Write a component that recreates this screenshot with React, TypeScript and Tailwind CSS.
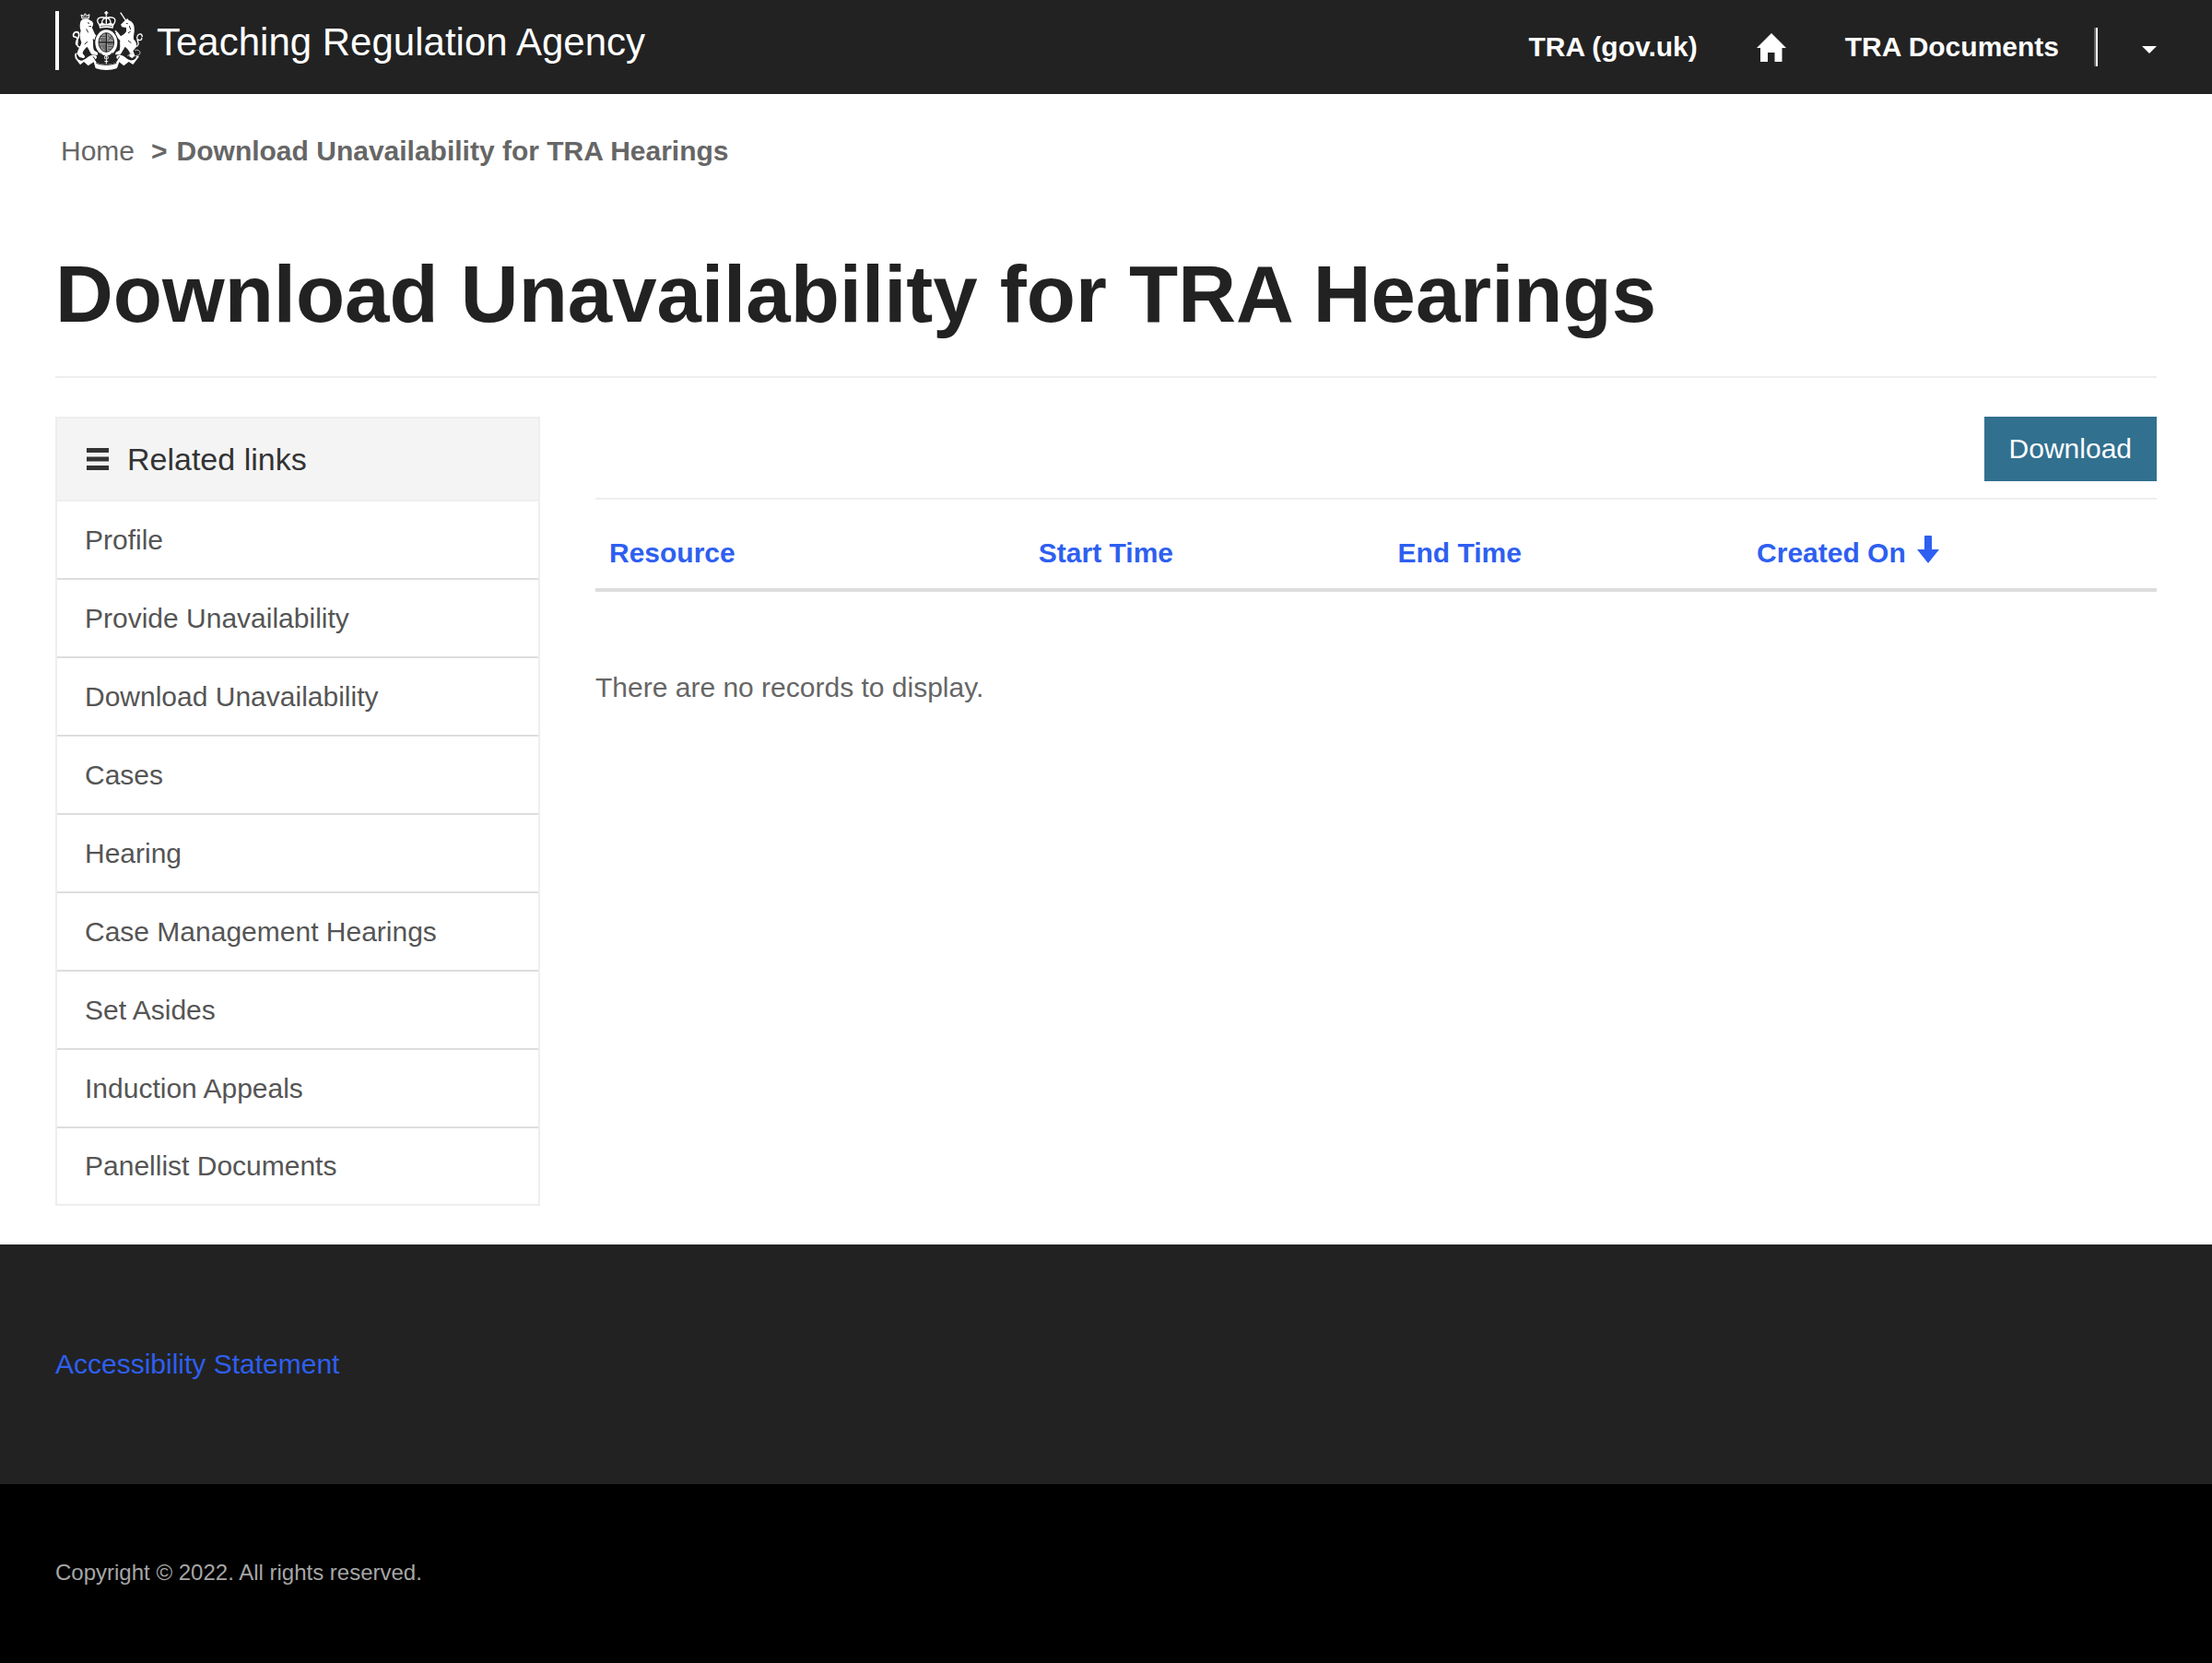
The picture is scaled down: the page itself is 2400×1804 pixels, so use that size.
const relatedLinks = [
  "Profile",
  "Provide Unavailability",
  "Download Unavailability",
  "Cases",
  "Hearing",
  "Case Management Hearings",
  "Set Asides",
  "Induction Appeals",
  "Panellist Documents",
];

function Crest() {
  return (
    <svg viewBox="9 12 234 192" className="h-16 w-[78px] shrink-0" aria-hidden="true" fill="none">
      {/* ribbon */}
      <path
        d="M26 146 C20 160 28 172 38 173 C52 174 60 156 78 155 C92 154 94 164 84 170 L90 180 C108 187 134 187 152 180 L158 170 C150 162 154 153 168 155 C184 158 190 174 206 172 C214 171 218 164 220 158 L228 160 L208 186 L194 177 L178 190 L163 178 L156 198 C136 206 106 206 86 198 L80 178 L62 190 L48 177 L36 187 L20 166 L18 152 Z"
        fill="#fff"
      />
      <path d="M88 181 C108 189 134 189 154 181 M78 160 L90 177 M164 160 L152 177" stroke="#222" strokeWidth="3" />
      {/* lion */}
      <path
        d="M38 44 C44 36 60 36 68 42 C76 44 80 50 78 58 L74 66 C80 74 80 84 88 92 L98 84 L102 92 L90 106 C84 106 80 104 77 102 C80 118 76 130 82 140 L94 148 L92 156 L74 154 C66 144 64 134 58 128 C50 136 44 142 44 150 L52 160 L48 166 L34 162 L26 152 C28 136 38 126 40 114 C34 100 34 86 38 76 C34 66 34 54 38 44 Z"
        fill="#fff"
      />
      <path d="M36 130 C16 128 34 104 24 98 C18 94 12 98 14 88 C18 78 32 76 32 90 C32 104 18 110 24 122" stroke="#fff" strokeWidth="5" />
      <path d="M42 36 L39 24 L47 28 L52 20 L58 27 L66 23 L64 36 Z" stroke="#fff" strokeWidth="3" fill="#666" />
      <path d="M60 50 L66 52 M64 62 L72 62 M56 70 L62 82 M50 120 L60 112 M84 100 L92 98" stroke="#222" strokeWidth="3" />
      {/* unicorn */}
      <path d="M167 17 L187 46" stroke="#fff" strokeWidth="4" />
      <path
        d="M180 44 L190 36 L194 42 C206 46 212 56 212 68 C214 80 208 92 210 104 C218 110 222 122 218 130 L208 142 L214 156 L206 166 L196 160 L198 146 C192 138 188 132 182 128 C176 138 172 146 166 154 L150 154 L152 146 L164 140 C168 128 164 116 166 108 L158 100 L150 84 L158 80 L168 94 C174 90 182 86 186 78 L186 66 L172 64 L168 56 Z"
        fill="#fff"
      />
      <path d="M186 52 L191 53 M196 60 L200 72 M192 84 L200 78 M192 108 L202 116" stroke="#222" strokeWidth="3" />
      <path d="M216 128 C236 124 216 104 222 94 C226 84 238 84 238 96 M224 104 C230 110 238 106 236 98" stroke="#fff" strokeWidth="4" />
      <path d="M157 84 L150 76 M172 104 L180 114" stroke="#fff" strokeWidth="5" />
      <path d="M214 140 C224 136 234 142 230 152 C224 160 214 154 204 164 M196 146 L206 152 M190 158 L204 150" stroke="#ccc" strokeWidth="3" />
      {/* crown */}
      <path d="M121 12 V26 M115 18 H127" stroke="#fff" strokeWidth="5" />
      <path d="M99 58 C84 38 96 28 121 34 C146 28 158 38 143 58 M121 28 V56 M108 57 C104 44 110 36 121 33 C132 36 138 44 134 57" stroke="#fff" strokeWidth="4" />
      <path d="M97 54 L108 50 L121 55 L134 50 L145 54 L143 68 C130 65 112 65 99 68 Z" fill="#fff" />
      <path d="M102 62 C114 59 128 59 140 62" stroke="#222" strokeWidth="2" />
      {/* garter and shield */}
      <ellipse cx="121" cy="115" rx="39" ry="45" fill="#222" />
      <ellipse cx="121" cy="115" rx="36" ry="42" fill="#fff" />
      <ellipse cx="121" cy="114" rx="25" ry="31" fill="#999" />
      <path d="M121 84 V145 M97 114 H146" stroke="#222" strokeWidth="4" />
      <path d="M101 94 H118 M100 102 H118 M104 108 H118 M126 92 L142 106 M140 92 L127 108 M126 120 H143 M126 128 H141 M126 136 H136 M104 120 V130 M111 120 V136 M117 120 V140" stroke="#222" strokeWidth="2" />
      <ellipse cx="121" cy="114" rx="25" ry="31" stroke="#222" strokeWidth="3" />
      {/* garter pendant */}
      <path d="M102 148 L110 158 M140 148 L132 158" stroke="#222" strokeWidth="3" />
      <circle cx="121" cy="164" r="9" fill="#222" />
      <circle cx="121" cy="163" r="6" stroke="#fff" strokeWidth="3" />
      <path d="M121 168 V184 M114 176 H128" stroke="#222" strokeWidth="7" />
      <path d="M121 154 V184 M115 176 H127" stroke="#fff" strokeWidth="3" />
    </svg>
  );
}

export default function App() {
  return (
    <div className="flex min-h-screen flex-col bg-white font-['Liberation_Sans',Arial,sans-serif] text-[30px] leading-[42px] text-[#666]">
      <header className="flex h-[102px] items-start justify-between bg-[#222] px-[60px] text-white">
        <a href="#" className="flex h-[88px] items-center gap-3.5">
          <span className="h-16 w-1 bg-white" />
          <Crest />
          <span className="pt-1 text-[42px] leading-[60px]">Teaching Regulation Agency</span>
        </a>
        <nav className="flex h-[102px] items-center font-bold">
          <a href="#">TRA (gov.uk)</a>
          <a href="#" aria-label="Home" className="ml-16">
            <svg viewBox="0 0 32 31" className="h-[31px] w-8" aria-hidden="true">
              <path d="M16 0 L32 16 H27.500 V31 H19.500 V21 H12 V31 H4 V16 H0 Z" fill="#fff" />
            </svg>
          </a>
          <a href="#" className="ml-16">TRA Documents</a>
          <span className="ml-[38px] h-[42px] w-1 border-l-2 border-[#666] bg-white" />
          <button type="button" aria-label="Account menu" className="ml-12 pt-1.5">
            <svg viewBox="0 0 16 8" className="h-2 w-4" aria-hidden="true">
              <path d="M0 0 H16 L8 8 Z" fill="#fff" />
            </svg>
          </button>
        </nav>
      </header>

      <main className="px-[60px] pt-[41px] pb-[42px]">
        <nav aria-label="Breadcrumb" className="flex gap-2.5 pl-1.5">
          <a href="#" className="pr-2">Home</a>
          <span className="font-bold">&gt;</span>
          <span className="font-bold">Download Unavailability for TRA Hearings</span>
        </nav>
        <h1 className="mt-[86px] border-b-2 border-[#eee] pb-[41px] text-[87px] leading-[96px] font-bold text-[#222]">
          Download Unavailability for TRA Hearings
        </h1>

        <div className="mt-[42px] grid grid-cols-[526fr_1694fr] items-start gap-[60px]">
          <aside className="border-2 border-[#eee]">
            <h2 className="flex h-[90px] items-center gap-5 border-b-2 border-[#eee] bg-[#f4f4f4] px-8 text-[34px] text-[#333]">
              <svg viewBox="0 0 24 24" className="h-6 w-6" aria-hidden="true">
                <path d="M0 0 H24 V5 H0 Z M0 9.500 H24 V14.500 H0 Z M0 19 H24 V24 H0 Z" fill="#333" />
              </svg>
              Related links
            </h2>
            <ul className="divide-y-2 divide-[#ddd] text-[#555]">
              {relatedLinks.map((label) => (
                <li key={label} className="flex h-[85px] items-center last:h-[82px]">
                  <a href="#" className="w-full px-[30px]">{label}</a>
                </li>
              ))}
            </ul>
          </aside>

          <section>
            <div className="flex justify-end border-b-2 border-[#eee] pb-[18px]">
              <button type="button" className="h-[70px] bg-[#31708f] px-[27px] text-white">Download</button>
            </div>
            <table className="w-full table-fixed border-collapse text-left">
              <colgroup>
                <col className="w-[27.5%]" />
                <col className="w-[23%]" />
                <col className="w-[23%]" />
                <col />
              </colgroup>
              <thead>
                <tr className="border-b-4 border-[#ddd] text-[#2e5ff0]">
                  <th scope="col" className="px-[15px] pt-[37px] pb-[17px]"><a href="#">Resource</a></th>
                  <th scope="col" className="px-[15px] pt-[37px] pb-[17px]"><a href="#">Start Time</a></th>
                  <th scope="col" className="px-[15px] pt-[37px] pb-[17px]"><a href="#">End Time</a></th>
                  <th scope="col" className="px-[15px] pt-[37px] pb-[17px]">
                    <a href="#" className="flex gap-3">
                      Created On
                      <svg viewBox="0 0 24 30" className="mt-0.5 h-[30px] w-6" aria-hidden="true">
                        <path d="M9 0 H15 Q16 0 16 1 V15 H24 L12 30 L0 15 H8 V1 Q8 0 9 0 Z" fill="#2e5ff0" />
                      </svg>
                    </a>
                  </th>
                </tr>
              </thead>
            </table>
            <p className="mt-[83px]">There are no records to display.</p>
          </section>
        </div>
      </main>

      <footer className="flex grow flex-col">
        <div className="bg-[#222] px-[60px] py-[109px]">
          <a href="#" className="text-[#2e5ff0]">Accessibility Statement</a>
        </div>
        <div className="grow bg-black px-[60px] py-[79px] text-2xl leading-[34px] text-[#a6a6a6]">
          <p>Copyright © 2022. All rights reserved.</p>
        </div>
      </footer>
    </div>
  );
}
